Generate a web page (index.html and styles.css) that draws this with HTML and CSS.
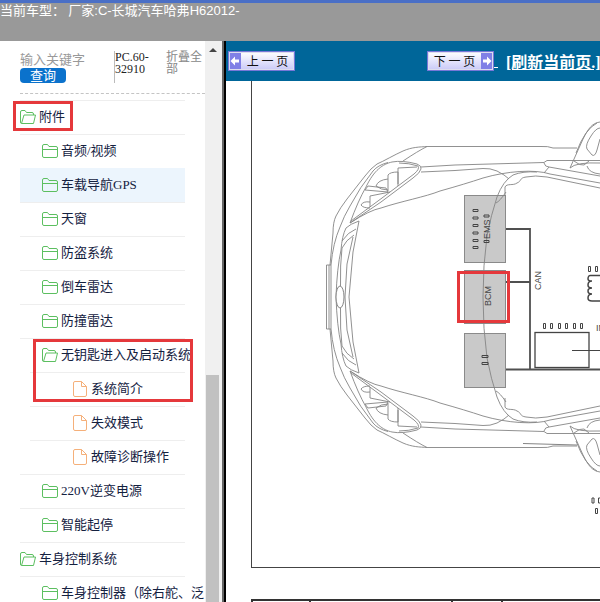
FILE: index.html
```html
<!DOCTYPE html>
<html lang="zh-CN">
<head>
    <meta charset="UTF-8">
    <meta name="viewport" content="width=device-width, initial-scale=1.0">
    <title>长城汽车哈弗H6 2012</title>
    <link rel="stylesheet" href="styles.css">
</head>
<body>

<!-- 图标定义 -->
<svg class="symbols" aria-hidden="true">
    <symbol id="folder" viewBox="0 0 16 14">
        <path d="M.5 12V2Q.5.5 2 .5H5.5L7 2.500H14Q15.500 2.500 15.500 4V12Q15.500 13.500 14 13.500H2Q.5 13.500.5 12ZM.5 5.500H15.500"/>
    </symbol>
    <symbol id="folder-open" viewBox="0 0 16 14">
        <path d="M1.500 13.500Q.5 13.500.5 12V2Q.5.5 2 .5H5L6.500 2.500H12Q13.500 2.500 13.500 4V5M1.500 13.500L4 5H15.500L13.500 13.500Z"/>
    </symbol>
    <symbol id="file" viewBox="0 0 14 16">
        <path d="M.5 14V2Q.5.500 2 .5H8.500L13.500 5.500V14Q13.500 15.500 12 15.500H2Q.5 15.500.5 14ZM8.500.5V5.500H13.500"/>
    </symbol>
</svg>

<header class="top">
    当前车型： 厂家<span class="latin">:C-</span>长城汽车哈弗<span class="latin">H62012-</span>
</header>

<main class="main">
    <aside class="sidebar">
        <form class="search" action="#">
            <div class="search-box">
                <input type="text" placeholder="输入关键字" aria-label="输入关键字">
                <button type="submit">查询</button>
            </div>
            <span class="code">PC.60-32910</span>
            <a class="fold" href="#">折叠全部</a>
        </form>

        <ul class="tree">
            <li>
                <a href="#"><svg class="icon"><use href="#folder-open"/></svg>附件</a>
                <span class="mark mark-root"></span>
                <ul>
                    <li><a href="#"><svg class="icon"><use href="#folder"/></svg>音频/视频</a></li>
                    <li><a class="active" href="#"><svg class="icon"><use href="#folder"/></svg>车载导航GPS</a></li>
                    <li><a href="#"><svg class="icon"><use href="#folder"/></svg>天窗</a></li>
                    <li><a href="#"><svg class="icon"><use href="#folder"/></svg>防盗系统</a></li>
                    <li><a href="#"><svg class="icon"><use href="#folder"/></svg>倒车雷达</a></li>
                    <li><a href="#"><svg class="icon"><use href="#folder"/></svg>防撞雷达</a></li>
                    <li>
                        <a href="#"><svg class="icon"><use href="#folder-open"/></svg>无钥匙进入及启动系统</a>
                        <span class="mark mark-sub"></span>
                        <ul>
                            <li><a href="#"><svg class="icon file"><use href="#file"/></svg>系统简介</a></li>
                            <li><a href="#"><svg class="icon file"><use href="#file"/></svg>失效模式</a></li>
                            <li><a href="#"><svg class="icon file"><use href="#file"/></svg>故障诊断操作</a></li>
                        </ul>
                    </li>
                    <li><a href="#"><svg class="icon"><use href="#folder"/></svg>220V逆变电源</a></li>
                    <li><a href="#"><svg class="icon"><use href="#folder"/></svg>智能起停</a></li>
                </ul>
            </li>
            <li>
                <a href="#"><svg class="icon"><use href="#folder-open"/></svg>车身控制系统</a>
                <ul>
                    <li><a href="#"><svg class="icon"><use href="#folder"/></svg>车身控制器（除右舵、泛</a></li>
                </ul>
            </li>
        </ul>
    </aside>

    <div class="scrollbar">
        <span class="arrow-up"></span>
        <span class="thumb"></span>
    </div>

    <section class="viewer">
        <nav class="toolbar">
            <button class="page-btn prev" type="button">
                <svg class="arrow" viewBox="0 0 12 17"><path d="M1.500 8.500L6 4V7H10V10H6V13Z"/></svg>
                <span>上 一 页</span>
            </button>
            <button class="page-btn next" type="button">
                <span>下 一 页</span>
                <svg class="arrow" viewBox="0 0 12 17"><path d="M10.500 8.500L6 4V7H2V10H6V13Z"/></svg>
            </button>
            <a class="gap-link" href="#" aria-label="下一页">&nbsp;</a>
            <a class="refresh" href="#">[刷新当前页.]</a>
        </nav>

        <div class="sheet">
            <div class="figure">
                <svg class="diagram" viewBox="252 81 348 486">
                    <!-- 控制模块 -->
                    <g fill="#c9c9c9" stroke="#8a8a8a">
                        <rect x="464.5" y="195.5" width="41" height="67"/>
                        <rect x="464.5" y="270.5" width="41" height="53"/>
                        <rect x="464.5" y="333.5" width="41" height="54"/>
                    </g>

                    <!-- 车身轮廓，下半部分为镜像 -->
                    <g id="half" fill="none" stroke="#858585" stroke-width=".9">
                        <path d="M331 297V265H326.500V297M329 265V297"/>
                        <path d="M330 265L333 233Q333 222 336 216Q340 208 347 199L365 176Q371 168 377 164C384 161 394 155 403 151C412 147 420 147 427 146.500H541Q548 146 553 148H577"/>
                        <path d="M427 146.500Q418 151 403 161"/>
                        <path d="M331 265Q333 243 340 227Q344 216 350 206Q360 187 373 171Q378 165 388 162.500"/>
                        <path d="M350 223Q358 201 366 187C374 170 383 164 392 162Q402 160 417 164Q422 166 421 169Q420 173 413 178L381 202Z"/>
                        <path d="M351 221L382 198L414 174Q420 169 418 166Q409 163 399 163"/>
                        <path d="M350 223Q370 210 381 208C402 201 425 197 440 191Q465 184 483 178C507 171 535 169 550 174L600 183"/>
                        <path d="M370 207V196L390 192M370 202Q363 201 361 205Q363 208 370 208M365 190L388 192L386 188L368 186ZM388 191V175Q390 172 398 172V186M388 179Q378 180 376 186Q381 190 388 190M398 184V168L417 167"/>
                        <path d="M421 167L455 165L544 162.500L547 160.500H600M421 172L455 170.500L483 168.500Q490 168 497 171Q505 175 509 179"/>
                        <path d="M544 163Q545 167 549 167L600 176M549 167L544 173"/>
                        <path d="M483 297Q483 265 487 236Q491 215 497 197Q503 181 513 175Q523 171 537 172"/>
                        <path d="M505 196V187C507 183 513 186 517 183C522 181 519 178 526 177Q535 175 547 177L600 188"/>
                        <path d="M496 203Q500 201 506 192"/>
                        <path d="M336 297Q337 268 341 250Q342 236 346 228Q350 224 359 221L353 252L349 297M340.500 286Q340 265 342 248Q346 240 354 235M342 241Q348 232 356 229M345 297L347 264L353 237"/>
                        <path d="M570 168L583 139C588 129 592 123 600 122M576 153Q585 129 597 123M570 168Q576 162 600 163"/>
                        <path d="M600 128Q596 128 591 136Q585 145 587 149L592 155Q595 157 597 150L600 139M574 161Q580 166 584 165L589 161M587 166Q589 173 600 174"/>
                    </g>
                    <use href="#half" transform="translate(0 594) scale(1 -1)"/>
                    <g fill="none" stroke="#858585">
                        <ellipse cx="340" cy="297" rx="4" ry="11" fill="#fff"/>
                        <path d="M523 443.500L577 445"/>
                    </g>

                    <!-- CAN 总线 -->
                    <path d="M506 229H530V369M506 282H530M506 369.500H600" fill="none" stroke="#505050" stroke-width="1.800"/>
                    <g fill="none" stroke="#444">
                        <rect x="535" y="332.500" width="54" height="35" stroke-width="1.300"/>
                        <path d="M572 350.500H600"/>
                        <path d="M600 275.500H591Q588 275 588 279Q588 281 592 281Q588 281 588 285Q588 288 592 288Q588 288 588 291Q588 294 592 294Q588 294 588 298Q588 301 592 301H600" stroke-width="1.500"/>
                        <path d="M543.500 323.500h2v5h-2zM550.500 323.500h2v5h-2zM558.500 323.500h2v5h-2zM565.500 323.500h2v5h-2zM573.500 323.500h2v5h-2zM580.500 323.500h2v5h-2z"/>
                        <path d="M588.500 266.500h2v5h-2zM595.500 266.500h2v5h-2zM592 498h2v5h-2zM598.500 498h2v5h-2zM595.500 508.500h2v5h-2z"/>
                        <path d="M473 209.500h5v2h-5zM473 217h5v2h-5zM473 224.500h5v2h-5zM473 232h5v2h-5zM473 239.500h5v2h-5zM473 246.500h5v2h-5zM484 215h5v2h-5zM484 240.500h5v2h-5zM482 355.500h6v2h-6zM482 362.500h6v2h-6z"/>
                    </g>
                    <g class="labels">
                        <text transform="translate(490 239) rotate(-90)">EMS</text>
                        <text transform="translate(491 306) rotate(-90)">BCM</text>
                        <text transform="translate(541 290) rotate(-90)">CAN</text>
                        <text x="596" y="331">IN</text>
                    </g>

                    <rect x="458.500" y="272.500" width="50" height="49" fill="none" stroke="#e5383b" stroke-width="3"/>
                </svg>
            </div>
            <table class="parts">
                <tr>
                    <td></td>
                    <td></td>
                    <td></td>
                    <td></td>
                </tr>
            </table>
        </div>
    </section>
</main>

</body>
</html>
```

FILE: styles.css
```css
* {
    box-sizing: border-box;
}

body {
    display: flex;
    flex-direction: column;
    height: 100vh;
    margin: 0;
    overflow: hidden;
    background-color: #fff;
    font-family: "Liberation Serif", "Noto Sans CJK SC", serif;
    font-size: 13px;
}

.symbols {
    display: none;
}

/* 顶部 */
.top {
    flex: 0 0 41px;
    border-top: 3px solid #4a6fc6;
    background-color: #999;
    color: #fff;
    line-height: 16px;
    white-space: nowrap;
}

.top .latin {
    font-family: "Liberation Sans", sans-serif;
}

.main {
    display: flex;
    flex: 1;
    min-height: 0;
}

/* 左侧目录 */
.sidebar {
    flex: 0 0 205px;
    padding-left: 20px;
    overflow: hidden;
}

.search {
    display: flex;
    height: 53px;
    padding-top: 10px;
    border-bottom: 1px dashed #c4c4c4;
    font-size: 12px;
    line-height: 12px;
}

.search-box {
    display: flex;
    flex: 0 0 94px;
    flex-direction: column;
    align-items: flex-start;
}

.search-box input {
    width: 90px;
    height: 17px;
    padding: 0;
    border: none;
    outline: none;
    background: none;
    font-family: inherit;
    font-size: 13px;
}

.search-box input::placeholder {
    color: #999;
}

.search-box button {
    width: 46px;
    height: 15px;
    padding: 0;
    border: none;
    border-radius: 4px;
    background-color: #0b72cc;
    color: #fff;
    font-family: inherit;
    font-size: 13px;
    line-height: 15px;
}

.code {
    width: 52px;
    height: 32px;
    border-left: 1px solid #bbb;
    color: #222;
}

.fold {
    width: 38px;
    color: #888;
    text-decoration: none;
}

.tree,
.tree ul {
    margin: 0;
    padding: 0;
    list-style: none;
}

.tree {
    width: 165px;
    padding-top: 6px;
}

.tree li {
    position: relative;
}

.tree a {
    display: flex;
    align-items: center;
    gap: 3px;
    height: 34px;
    padding-bottom: 4px;
    border-top: 1px solid #eee;
    color: #14213f;
    text-decoration: none;
    white-space: nowrap;
}

.tree ul a {
    padding-left: 22px;
}

.tree ul ul {
    padding-left: 10px;
}

.tree ul ul a {
    gap: 4px;
    padding-left: 43px;
}

.tree a.active {
    border-color: #ecf5fd;
    background-color: #ecf5fd;
}

.icon {
    flex: none;
    width: 16px;
    height: 14px;
    margin-top: 2px;
    fill: none;
    stroke: #5cbf60;
}

.icon.file {
    width: 14px;
    height: 16px;
    stroke: #f5b07a;
}

.mark {
    position: absolute;
    z-index: 1;
    border: 3px solid #e5383b;
    pointer-events: none;
}

.mark-root {
    top: 1px;
    left: -7px;
    width: 60px;
    height: 30px;
}

.mark-sub {
    top: 1px;
    left: 13px;
    width: 160px;
    height: 63px;
}

/* 滚动条 */
.scrollbar {
    display: flex;
    flex: 0 0 21px;
    flex-direction: column;
    justify-content: space-between;
    align-items: center;
    padding: 7px 4px 0 0;
    border-right: 2px solid #000;
    background: linear-gradient(to left, #666 2px, #f0f0f0 2px);
}

.arrow-up {
    border: 4px solid transparent;
    border-top: none;
    border-bottom: 4px solid #444;
}

.thumb {
    width: 13px;
    height: 41%;
    background-color: #c1c1c1;
}

/* 右侧内容 */
.viewer {
    flex: 1;
    min-width: 0;
    overflow: hidden;
}

.toolbar {
    display: flex;
    align-items: center;
    height: 40px;
    padding-left: 2px;
    background-color: #069;
    white-space: nowrap;
}

.page-btn {
    display: flex;
    flex: none;
    align-items: stretch;
    width: 67px;
    height: 20px;
    padding: 0;
    border: 1px solid #7777d8;
    outline: 1px solid #dde;
    outline-offset: -2px;
    background: linear-gradient(#fff, #c9c9f7);
    color: #111;
    font-family: "Noto Sans CJK SC", sans-serif;
    font-size: 12px;
    line-height: 18px;
}

.page-btn span {
    flex: 1;
}

.page-btn .arrow {
    width: 12px;
    height: 18px;
    background-color: #8080e6;
    fill: #fff;
}

.prev {
    margin-right: 132px;
}

.gap-link,
.refresh {
    color: #fff;
    font-size: 16px;
}

.refresh {
    margin-left: 8px;
    font-weight: bold;
}

.sheet {
    padding-left: 25px;
}

.figure {
    border-bottom: 1px solid #444;
    border-left: 1px solid #444;
}

.diagram {
    display: block;
    width: 100%;
}

.labels {
    fill: #444;
    font-family: "Liberation Sans", sans-serif;
    font-size: 9px;
}

.parts {
    width: 120%;
    margin-top: 31px;
    border-collapse: collapse;
    table-layout: fixed;
}

.parts td {
    height: 34px;
    border: 2px solid #333;
}

.parts td:nth-child(1) {
    width: 14%;
}

.parts td:nth-child(2) {
    width: 34%;
}

.parts td:nth-child(3) {
    width: 12%;
}
```
